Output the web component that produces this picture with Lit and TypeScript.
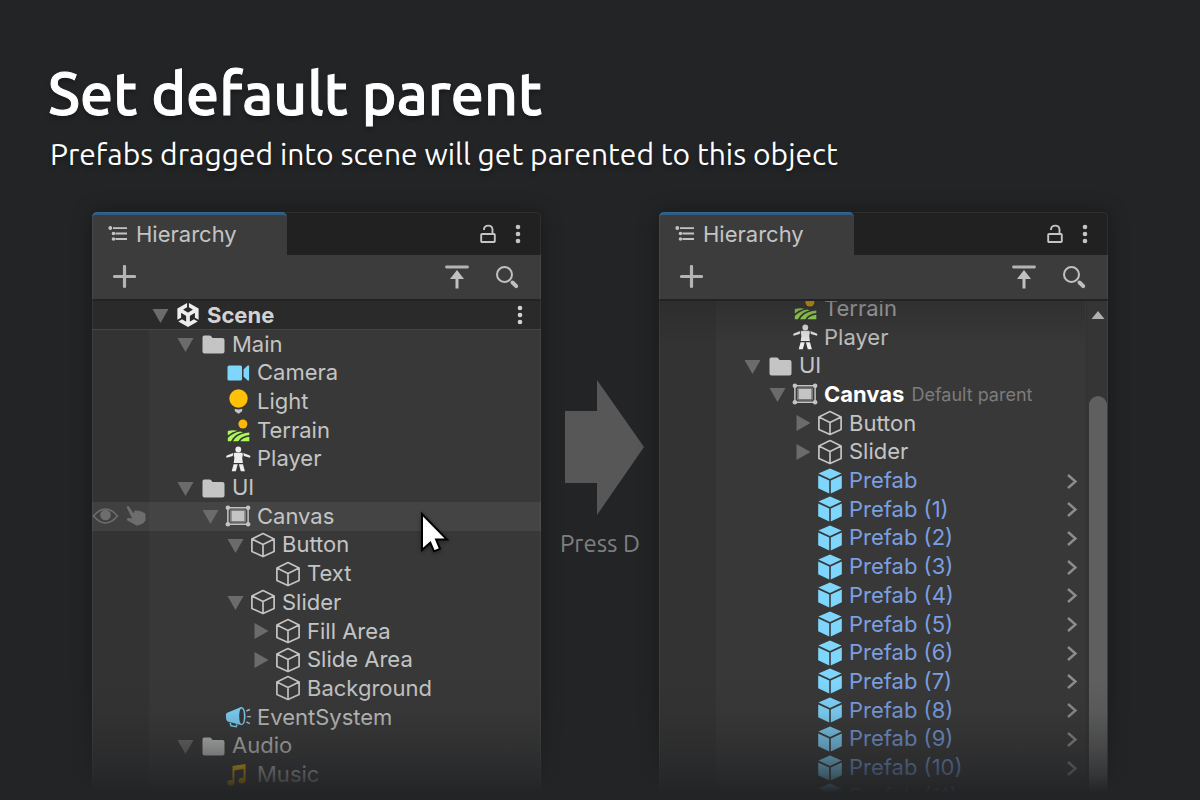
import { LitElement, html, svg, css, nothing } from "lit";
import { customElement, property, state } from "lit/decorators.js";
import { classMap } from "lit/directives/class-map.js";

type IconName =
  | "scene" | "folder" | "camera" | "light" | "terrain" | "player"
  | "canvas" | "cube" | "prefab" | "event" | "music";

interface Item {
  name: string;
  icon: IconName;
  level: number;
  fold?: "open" | "closed";
  hovered?: boolean;
  note?: string;
}

const CUBE = svg`<path d="M13 1.6 24.1 7v12.4L13 24.6 1.9 19.4V7ZM1.9 7 13 12.6 24.1 7M13 12.6v12" fill="none" stroke="#c4c4c4" stroke-width="1.700" stroke-linejoin="round"/>`;

const ICONS = {
  scene: svg`<path transform="translate(1 1)" fill="#eee" d="m12.9288 4.2939 3.7997 2.1929c.1366.077.1415.2905 0 .3675l-4.515 2.6076a.4192.4192 0 0 1-.4246 0L7.274 6.8543c-.139-.0745-.1415-.293 0-.3675l3.7972-2.193V0L1.3758 5.5977V16.793l3.7177-2.1456v-4.3858c-.0025-.1565.1813-.2682.318-.1838l4.5148 2.6076a.4252.4252 0 0 1 .2136.3676v5.2127c.0025.1565-.1813.2682-.3179.1838l-3.7996-2.1929-3.7178 2.1457L12 24l9.6954-5.5977-3.7178-2.1457-3.7996 2.1929c-.1341.082-.3229-.0248-.3179-.1838V13.053c0-.1565.087-.2956.2136-.3676l4.5149-2.6076c.134-.082.3228.0224.3179.1838v4.3858l3.7177 2.1456V5.5977L12.9288 0Z"/>`,
  folder: svg`<path fill="#c4c4c4" d="M4.300 4.400h5.400q.8 0 1.300.7L12.500 7h10q2 0 2 2V20.400q0 2-2 2H4.500q-2 0-2-2V6.200Q2.500 4.400 4.300 4.400Z"/>`,
  camera: svg`<g fill="#7fd6fd"><rect x="2.500" y="5.500" width="14.500" height="15" rx="1.500"/><path d="M24.100 5.500v15h-1.400l-4.200-4V9.500l4.200-4Z"/></g>`,
  light: svg`<circle cx="13.500" cy="10.500" r="9.200" fill="#ffc107"/><path fill="#c4c4c4" d="M9.800 20.800q3.700 1.400 7.400 0v1.900q-.3 1.300-1.700 1.600-.5 1.200-2 1.200t-2-1.200q-1.400-.3-1.700-1.600Z"/>`,
  terrain: svg`<circle cx="17.900" cy="7" r="4.500" fill="#ffb70a"/><g transform="translate(.3 .6)"><path fill="#adf75a" d="M2.500 13.500q5-1.700 9.800-.3Q6.300 14.500 2.500 18ZM2.500 20.300q5.400-5.200 12.200-6.300l3 .6Q9.500 16.200 5.600 23.600H2.500ZM7.600 23.600q3.400-6.400 12.600-8.200l3.800-.5v2.500q-8 .9-11 6.200ZM15 23.600q2.700-3.800 9-4.500v4.500Z"/></g>`,
  player: svg`<g fill="#eee"><circle cx="13.300" cy="3.500" r="2.900"/><path transform="translate(.3 0)" d="M9 6.800h8l.6 1.600-.7 3.500.7 5H8.400l.7-5-.7-3.500ZM8 7l-.6 2.900-6.100 1.900q-1-1.700.2-2.400ZM18 7l.6 2.900 6.100 1.900q1-1.700-.2-2.400ZM8.300 18.300h4.100l-1.900 7H6.400ZM17.700 18.300h-4.100l1.900 7h4.100Z"/></g>`,
  canvas: svg`<g fill="#c4c4c4"><circle cx="2.900" cy="4.700" r="2.300"/><circle cx="23.100" cy="4.700" r="2.300"/><circle cx="2.900" cy="21.300" r="2.300"/><circle cx="23.100" cy="21.300" r="2.300"/><rect x="6.400" y="7.700" width="13.200" height="10.600"/></g><path d="M2.900 4.700h20.200v16.600H2.900Z" fill="none" stroke="#c4c4c4" stroke-width="1.500"/><rect x="5.400" y="6.900" width="15.200" height="12.200" rx="1" fill="none" stroke="#c4c4c4" stroke-width="1" opacity=".5"/>`,
  cube: CUBE,
  prefab: svg`<g fill="#7fd6fd"><path d="m13 .6 11.600 5L13 10.900 1.400 5.600ZM1.200 7.400 12.200 12.500v13L1.200 20.300ZM24.800 7.400l-11 5.100v13l11-5.200Z"/></g>`,
  event: svg`<g transform="translate(.6 0)"><path fill="#7fd6fd" d="M1 8.900 15.500 3q2.800.1 4 5 1.300 5.500-.4 10.200-1 2.800-3 3L2 17.500Q.3 16.600.3 12.800.2 9.800 1 8.900Z"/><path fill="#353535" d="M15.800 4.500q1.800.2 2.300 4.500.6 4.500-.2 8.200-.6 2.500-2 2.700-1.500-.4-2.100-4.200-.6-4.500.2-8.200.5-2.600 1.800-3Z"/><path d="m4.500 18.800.9 2.900 5.300 1 .6-2.300" fill="none" stroke="#7fd6fd" stroke-width="1.600"/><path d="m20.800 7 3.500-1.700M21.500 12.600h3.800M20.800 18l3.500 1.700" stroke="#c4c4c4" stroke-width="1.400"/></g>`,
  music: svg`<g fill="#ffc107"><path d="M7.500 4 20.500 2v16.500h-1.900V7L9.400 8.500v13H7.500Z"/><ellipse cx="5.800" cy="20.800" rx="3.500" ry="2.900"/><ellipse cx="17" cy="18.600" rx="3.500" ry="2.900"/></g>`,
};

const BEFORE: Item[] = [
  { name: "Scene", icon: "scene", level: 0, fold: "open" },
  { name: "Main", icon: "folder", level: 1, fold: "open" },
  { name: "Camera", icon: "camera", level: 2 },
  { name: "Light", icon: "light", level: 2 },
  { name: "Terrain", icon: "terrain", level: 2 },
  { name: "Player", icon: "player", level: 2 },
  { name: "UI", icon: "folder", level: 1, fold: "open" },
  { name: "Canvas", icon: "canvas", level: 2, fold: "open", hovered: true },
  { name: "Button", icon: "cube", level: 3, fold: "open" },
  { name: "Text", icon: "cube", level: 4 },
  { name: "Slider", icon: "cube", level: 3, fold: "open" },
  { name: "Fill Area", icon: "cube", level: 4, fold: "closed" },
  { name: "Slide Area", icon: "cube", level: 4, fold: "closed" },
  { name: "Background", icon: "cube", level: 4 },
  { name: "EventSystem", icon: "event", level: 2 },
  { name: "Audio", icon: "folder", level: 1, fold: "open" },
  { name: "Music", icon: "music", level: 2 },
];

const AFTER: Item[] = [
  { name: "Terrain", icon: "terrain", level: 2 },
  { name: "Player", icon: "player", level: 2 },
  { name: "UI", icon: "folder", level: 1, fold: "open" },
  { name: "Canvas", icon: "canvas", level: 2, fold: "open", note: "Default parent" },
  { name: "Button", icon: "cube", level: 3, fold: "closed" },
  { name: "Slider", icon: "cube", level: 3, fold: "closed" },
  { name: "Prefab", icon: "prefab", level: 3 },
  ...Array.from({ length: 11 }, (_, i): Item => ({ name: `Prefab (${i + 1})`, icon: "prefab", level: 3 })),
];

@customElement("hierarchy-panel")
class HierarchyPanel extends LitElement {
  @property({ attribute: false }) items: Item[] = [];
  @property({ type: Boolean }) scrolled = false;
  @state() private folded = new Set<Item>();

  static styles = css`
    :host {
      display: flex;
      flex-direction: column;
      position: relative;
      min-width: 0;
      min-height: 0;
      border-radius: 5px 5px 0 0;
      background: #383838;
      box-shadow: 0 0 20px rgba(0, 0, 0, 0.35);
      font-family: Inter, "Liberation Sans", sans-serif;
      font-size: 22px;
      color: #c4c4c4;
    }
    button {
      display: flex;
      align-items: center;
      justify-content: center;
      padding: 0;
      border: 0;
      background: none;
      color: inherit;
      font: inherit;
    }
    svg { display: block; flex: none; }
    .tabs {
      display: flex;
      height: 43px;
      flex: none;
      background: #212121;
      border-radius: 5px 5px 0 0;
    }
    .tab {
      box-sizing: border-box;
      width: 195px;
      justify-content: flex-start;
      gap: 8px;
      padding: 0 0 2px 16px;
      border-top: 3px solid #2c5d87;
      border-radius: 5px 5px 0 0;
      background: #3c3c3c;
    }
    .tools { display: flex; align-items: center; margin-left: auto; padding-right: 10px; }
    .tools button { width: 26px; height: 32px; }
    .tools .lock { width: 34px; }
    .bar {
      display: flex;
      align-items: center;
      height: 44px;
      flex: none;
      background: #3c3c3c;
      border-bottom: 2px solid #232323;
      padding: 0 21px 0 20px;
      gap: 24px;
    }
    .bar .add { margin-right: auto; }
    .body {
      flex: 1;
      display: flex;
      min-height: 0;
      padding-bottom: 11px;
      overflow: hidden;
      background: linear-gradient(to right, #333 57px, #383838 57px);
    }
    .list {
      flex: 1;
      display: grid;
      grid-auto-rows: calc(100% / 17);
      margin: 0;
      padding: 0;
      list-style: none;
    }
    .scrolled .list { margin-top: -7px; margin-bottom: 7px; }
    .row {
      position: relative;
      display: flex;
      align-items: center;
      white-space: nowrap;
    }
    .gutter { display: flex; align-items: center; gap: 7px; width: 56px; flex: none; }
    .step { width: 25px; flex: none; }
    .fold { width: 25px; flex: none; align-self: stretch; }
    .icon { display: flex; justify-content: center; width: 30px; margin-right: 4px; flex: none; }
    .label { padding-bottom: 1px; }
    .scene { background: #2a2a2a; box-shadow: inset 0 -1px #444; font-weight: 700; color: #d2d2d2; }
    .hovered { background: linear-gradient(to right, #404040 57px, #444 57px); }
    .prefab { color: #7b9fe0; }
    .parent { font-weight: 700; color: #fff; }
    .note { margin-left: 7px; font-size: 18px; font-weight: 400; color: #7c7c7c; }
    .end { margin-left: auto; width: 24px; margin-right: 9px; align-self: stretch; }
    .scrolled .end { margin-right: 2px; color: #8c8c8c; }
    .cursor { position: absolute; z-index: 1; left: 328px; top: 9px; filter: drop-shadow(0 1px 2px rgba(0, 0, 0, 0.4)); }
    .scrollbar {
      display: flex;
      flex-direction: column;
      align-items: center;
      gap: 76px;
      width: 21px;
      flex: none;
      border-left: 1px solid #303030;
      background: #353535;
      margin-bottom: -11px;
    }
    .scrollbar button { width: 21px; height: 10px; padding-top: 9px; box-sizing: content-box; }
    .thumb { flex: 1; width: 18px; border-radius: 9px 9px 0 0; background: #5f5f5f; }
    .edge, .fade, .fade-top { position: absolute; pointer-events: none; left: 0; right: 0; }
    .edge { inset: 0; border: 1px solid rgba(255, 255, 255, 0.06); border-radius: 5px 5px 0 0; }
    .fade {
      left: -24px;
      right: -24px;
      bottom: 0;
      height: 120px;
      background: linear-gradient(
        rgba(35, 36, 38, 0),
        rgba(35, 36, 38, 0.1) 27%,
        rgba(35, 36, 38, 0.38) 55%,
        rgba(35, 36, 38, 0.7) 79%,
        #232426 94%
      );
    }
    .fade-top {
      top: 89px;
      height: 44px;
      right: 23px;
      background: linear-gradient(rgba(38, 38, 38, 0.45), rgba(48, 48, 48, 0));
    }
  `;

  private toggle(item: Item) {
    const next = new Set(this.folded);
    next.has(item) ? next.delete(item) : next.add(item);
    this.folded = next;
  }

  private visible(): Item[] {
    const out: Item[] = [];
    let limit = Infinity;
    for (const item of this.items) {
      if (item.level > limit) continue;
      limit = this.folded.has(item) ? item.level : Infinity;
      out.push(item);
    }
    return out;
  }

  private dots() {
    return html`<svg width="6" height="20" viewBox="0 0 6 20" fill="currentColor">
      <circle cx="3" cy="3" r="2.300" /><circle cx="3" cy="10" r="2.300" /><circle cx="3" cy="17" r="2.300" />
    </svg>`;
  }

  private row(item: Item) {
    const open = item.fold === "open" && !this.folded.has(item);
    const classes = {
      row: true,
      scene: item.icon === "scene",
      prefab: item.icon === "prefab",
      hovered: !!item.hovered,
      parent: !!item.note,
    };
    return html`<li class=${classMap(classes)}>
      <span class="gutter">${item.hovered
        ? html`<svg width="27" height="18" viewBox="0 0 27 18">
              <path d="M1.500 9Q13.500-5 25.500 9 13.500 23 1.500 9Z" fill="none" stroke="#6d6d6d" stroke-width="1.600" />
              <circle cx="13.500" cy="8" r="5.300" fill="#6d6d6d" />
            </svg>
            <svg width="20" height="22" viewBox="0 0 20 22">
              <path fill="#6d6d6d" d="M.6 2.200Q1.300.5 3 1.400L7.600 8.600 8.600 5.700Q10.300 4.500 11.300 6.200 13 4.800 14.300 6.700 15.800 5.600 17 7.500 19.200 7.200 19.500 9.500V15.500L17 18.500 11 20.800 1 15.300Q.3 13.300 2.400 13L6.200 13.400Z" />
            </svg>`
        : nothing}</span>
      ${Array.from({ length: item.level }, () => html`<span class="step"></span>`)}
      ${item.fold
        ? html`<button class="fold" aria-label="Toggle ${item.name}" aria-expanded=${open} @click=${() => this.toggle(item)}>
            <svg width="18" height="18" viewBox="0 0 18 18">
              <path fill="#6b6b6b" d=${open ? "M.5 3h16l-8 14Z" : "M2.500 1l14 8-14 8Z"} />
            </svg>
          </button>`
        : html`<span class="fold"></span>`}
      <span class="icon"><svg width="26" height="26" viewBox="0 0 26 26">${ICONS[item.icon]}</svg></span>
      <span class="label">${item.name}</span>
      ${item.note ? html`<span class="note">${item.note}</span>` : nothing}
      ${item.icon === "scene" ? html`<button class="end" aria-label="Scene menu">${this.dots()}</button>` : nothing}
      ${item.icon === "prefab"
        ? html`<button class="end" aria-label="Open ${item.name}">
            <svg width="12" height="18" viewBox="0 0 12 18">
              <path d="m2 3 7.500 6.500L2 16" fill="none" stroke="currentColor" stroke-width="2.400" />
            </svg>
          </button>`
        : nothing}
      ${item.hovered
        ? html`<svg class="cursor" width="32" height="44" viewBox="0 0 32 44">
            <path d="M2 3v36l8.300-7.300 3.700 8.600 6-2.500-3.900-9.200H27Z" fill="#fff" stroke="#000" stroke-width="2" />
          </svg>`
        : nothing}
    </li>`;
  }

  render() {
    return html`
      <div class="tabs" role="tablist">
        <button class="tab" role="tab" aria-selected="true">
          <svg width="20" height="16" viewBox="0 0 20 16" fill="#c4c4c4">
            <circle cx="2.300" cy="2" r="1.900" /><circle cx="5.500" cy="7.500" r="1.800" /><circle cx="5.500" cy="13" r="1.800" />
            <path d="M5 1.200h14v1.800H5ZM7.500 6.600H19v1.800H7.500ZM7.500 12.100H19v1.800H7.500Z" />
          </svg>
          Hierarchy
        </button>
        <div class="tools">
          <button class="lock" aria-label="Lock">
            <svg width="16" height="20" viewBox="0 0 16 20" fill="none" stroke="currentColor" stroke-width="1.900">
              <rect x="1.200" y="10" width="13.600" height="8" rx=".8" /><path d="M4 6V5.300Q4.300 1.600 8.300 1.600t4.200 3.900V10" />
            </svg>
          </button>
          <button aria-label="Panel menu">${this.dots()}</button>
        </div>
      </div>
      <div class="bar">
        <button class="add" aria-label="Create">
          <svg width="24" height="24" viewBox="0 0 24 24">
            <path d="M12.500 1.500v20M2.500 11.500h20" stroke="#b4b4b4" stroke-width="3.200" stroke-linecap="round" />
          </svg>
        </button>
        <button aria-label="Collapse all">
          <svg width="26" height="26" viewBox="0 0 26 26">
            <path d="M2.500 3h21" stroke="#b4b4b4" stroke-width="2.800" stroke-linecap="round" />
            <path d="M13 6 20 15h-5.500v9.500h-3V15H6Z" fill="#c0c0c0" />
          </svg>
        </button>
        <button aria-label="Search">
          <svg width="26" height="26" viewBox="0 0 26 26" fill="none" stroke="#c0c0c0">
            <circle cx="10.500" cy="10.500" r="7.500" stroke-width="2" />
            <path d="m18.500 18.500 3.700 3.700" stroke-width="4" stroke-linecap="round" />
          </svg>
        </button>
      </div>
      <div class="body ${this.scrolled ? "scrolled" : ""}">
        <ul class="list">${this.visible().map((item) => this.row(item))}</ul>
        ${this.scrolled
          ? html`<div class="scrollbar">
              <button aria-label="Scroll up">
                <svg width="14" height="10" viewBox="0 0 14 10"><path d="M7 1l6.500 8H.5Z" fill="#b0b0b0" /></svg>
              </button>
              <span class="thumb"></span>
            </div>`
          : nothing}
      </div>
      <span class="edge"></span>
      ${this.scrolled ? html`<span class="fade-top"></span>` : nothing}
      <span class="fade"></span>
    `;
  }
}

@customElement("app-root")
class AppRoot extends LitElement {
  static styles = css`
    :host {
      display: flex;
      flex-direction: column;
      height: 100vh;
      min-height: 640px;
      overflow: hidden;
      background: #232426;
      color: #fff;
      font-family: Ubuntu, "Noto Sans", "Open Sans", sans-serif;
    }
    header { padding: 56px 48px 34px; text-shadow: 0 3px 5px rgba(0, 0, 0, 0.35); }
    h1 {
      margin: 0;
      padding-bottom: 4px;
      font-size: 59px;
      line-height: 74px;
      font-weight: 500;
      -webkit-text-stroke: 1px #fff;
    }
    p { margin: 0; }
    .sub { padding: 0 0 4px 2px; font-size: 30px; line-height: 40px; }
    main {
      flex: 1;
      display: grid;
      grid-template-columns: 1fr 118px 1fr;
      min-height: 0;
      padding: 0 92px;
    }
    .between {
      display: flex;
      flex-direction: column;
      align-items: center;
      gap: 12px;
      padding-top: 168px;
    }
    .key { font-size: 24px; line-height: 34px; color: #7f7f7f; }
    .arrow { margin-left: 8px; }
  `;

  render() {
    return html`
      <header>
        <h1>Set default parent</h1>
        <p class="sub">Prefabs dragged into scene will get parented to this object</p>
      </header>
      <main>
        <hierarchy-panel .items=${BEFORE}></hierarchy-panel>
        <div class="between">
          <svg class="arrow" width="79" height="135" viewBox="0 0 79 135">
            <path d="M0 31h32V0l47 67-47 68v-32H0Z" fill="#575757" />
          </svg>
          <p class="key">Press D</p>
        </div>
        <hierarchy-panel .items=${AFTER} scrolled></hierarchy-panel>
      </main>
    `;
  }
}
